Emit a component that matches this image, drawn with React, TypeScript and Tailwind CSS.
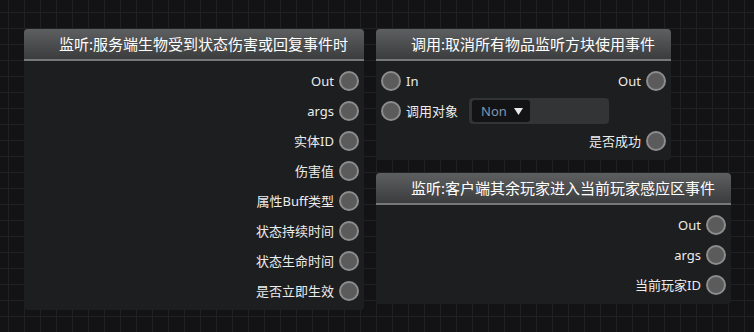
import React from 'react'

const font = { fontFamily: '"Noto Sans", "Noto Sans CJK SC", sans-serif' }

function Pin() {
  return <span className="block w-[20px] h-[20px] shrink-0 rounded-full border-2 border-[#8d8d8d] bg-[#5b5b5b]" />
}

function OutRow({ label }: { label: string }) {
  return (
    <div className="h-[30px] flex items-center justify-end gap-[5px] pr-[5px]">
      <span className="text-[13px] text-[#ececec] leading-none">{label}</span>
      <Pin />
    </div>
  )
}

function Header({ title }: { title: string }) {
  return (
    <div className="h-[32px] rounded-t-[4px] bg-[linear-gradient(to_bottom,#5e5f60,#3b3c3d)] border-b-2 border-[#77787a] flex items-center pl-[35px]">
      <span className="text-[15px] text-white leading-none whitespace-nowrap">{title}</span>
    </div>
  )
}

export default function App() {
  const node1 = ['Out', 'args', '实体ID', '伤害值', '属性Buff类型', '状态持续时间', '状态生命时间', '是否立即生效']
  const node3 = ['Out', 'args', '当前玩家ID']

  return (
    <div
      className="relative w-[754px] h-[332px] overflow-hidden bg-[#131315] bg-[linear-gradient(#202123_1px,transparent_1px),linear-gradient(90deg,#202123_1px,transparent_1px)] bg-[size:16px_16px] bg-[position:8px_12px]"
      style={font}
    >
      <div className="absolute left-[24px] top-[29px] w-[340px] rounded-[4px] bg-[#1d1e20]">
        <Header title="监听:服务端生物受到状态伤害或回复事件时" />
        <div className="pt-[5px] pb-[4px]">
          {node1.map((l) => (
            <OutRow key={l} label={l} />
          ))}
        </div>
      </div>

      <div className="absolute left-[376px] top-[29px] w-[295px] rounded-[4px] bg-[#1d1e20]">
        <Header title="调用:取消所有物品监听方块使用事件" />
        <div className="pt-[5px] pb-[4px]">
          <div className="h-[30px] flex items-center justify-between pl-[5px] pr-[5px]">
            <div className="flex items-center gap-[5px]">
              <Pin />
              <span className="text-[13px] text-[#ececec] leading-none">In</span>
            </div>
            <div className="flex items-center gap-[5px]">
              <span className="text-[13px] text-[#ececec] leading-none">Out</span>
              <Pin />
            </div>
          </div>
          <div className="h-[30px] flex items-center pl-[5px]">
            <Pin />
            <span className="ml-[5px] text-[13px] text-[#ececec] leading-none">调用对象</span>
            <div className="ml-[11px] w-[140px] h-[26px] rounded-[4px] bg-[#333436] p-[2px] pl-[3px]">
              <div className="w-[58px] h-[22px] rounded-[3px] bg-[#131315] flex items-center pl-[9px] gap-[7px]">
                <span className="text-[13px] text-[#8197b0] leading-none">Non</span>
                <svg width="9" height="7" viewBox="0 0 9 7">
                  <path d="M0 0H9L4.5 7Z" fill="#e8e8e8" />
                </svg>
              </div>
            </div>
          </div>
          <OutRow label="是否成功" />
        </div>
      </div>

      <div className="absolute left-[376px] top-[173px] w-[355px] rounded-[4px] bg-[#1d1e20]">
        <Header title="监听:客户端其余玩家进入当前玩家感应区事件" />
        <div className="pt-[5px] pb-[4px]">
          {node3.map((l) => (
            <OutRow key={l} label={l} />
          ))}
        </div>
      </div>
    </div>
  )
}
